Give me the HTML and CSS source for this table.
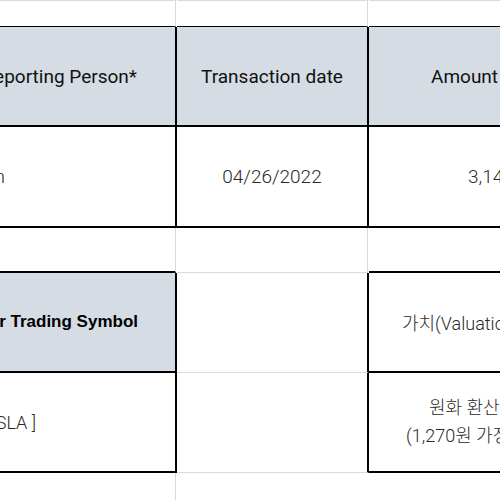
FILE: index.html
```html
<!DOCTYPE html>
<html>
<head>
<meta charset="utf-8">
<link rel="stylesheet" href="styles.css">
</head>
<body>
<div class="sheet">
  <div class="cell r0 c1"></div>
  <div class="cell r0 c2"></div>
  <div class="cell r0 c3"></div>

  <div class="cell hdr t1 c1 end pr38"><span>Name and Address of Reporting Person*</span></div>
  <div class="cell hdr t1 c2 mid"><span>Transaction date</span></div>
  <div class="cell hdr t1 c3 start pl62"><span>Amount of Securities Beneficially Owned</span></div>

  <div class="cell data t1 c1 end pr170"><span>Musk Elon</span></div>
  <div class="cell data t1 c2 mid"><span>04/26/2022</span></div>
  <div class="cell data t1 c3 start pl99"><span>3,140,000</span></div>

  <div class="cell gap g1"></div>
  <div class="cell gap g2"></div>
  <div class="cell gap g3"></div>

  <div class="cell hdr t2 c1 end pr37 bold"><span>Issuer Name and Ticker or Trading Symbol</span></div>
  <div class="cell plain t2 c2"></div>
  <div class="cell data t2 c3 start pl33 kr"><span>가치(Valuation, USD)</span></div>

  <div class="cell data t2 c1 end pr139 kr"><span>Tesla, Inc. [ TSLA ]</span></div>
  <div class="cell plain t2 c2"></div>
  <div class="cell data t2 c3 lines kr">
    <div class="line l1">원화 환산 가치 (KRW)</div>
    <div class="line l2">(1,270원 가정)</div>
  </div>

  <div class="cell tail c1"></div>
  <div class="cell tail c2"></div>
  <div class="cell tail c3"></div>
</div>
</body>
</html>
```

FILE: styles.css
```css
html, body {
  margin: 0;
  padding: 0;
  background: #ffffff;
}
body {
  width: 500px;
  height: 500px;
  overflow: hidden;
  font-family: "Roboto", "Noto Sans CJK KR", sans-serif;
  font-size: 19px;
}
.sheet {
  display: grid;
  grid-template-columns: 177px 192px 400px;
  grid-template-rows: 27px 100px 101px 45px 100px 100px 40px;
  width: 769px;
}
.cell {
  box-sizing: border-box;
  display: flex;
  align-items: center;
  overflow: hidden;
  white-space: nowrap;
}
.end { justify-content: flex-end; }
.mid { justify-content: center; }
.start { justify-content: flex-start; }

.r0 {
  border-top: 1px solid #dadada;
  border-bottom: 1px solid #000;
}
.r0.c1 { border-right: 1px solid #dadada; margin-right: 1px; }
.r0.c2 { border-right: 1px solid #dadada; margin-right: 1px; }

.hdr { background: #d6dce4; color: #111; }
.bold { font-weight: 700; color: #000; font-family: "Liberation Sans", Arial, sans-serif; font-size: 17px; }
.data { color: #2a2a2a; font-weight: 300; }
.kr { font-size: 18px; }

.t1 { border-bottom: 2px solid #000; }
.t1.c1, .t1.c2 { border-right: 2px solid #000; }
.r0 + .r0 + .r0 + .t1 { }

.gap.g1 { border-right: 1px solid #dadada; margin-right: 1px; border-bottom: 2px solid #000; }
.gap.g2 { border-right: 1px solid #dadada; margin-right: 1px; border-bottom: 1px solid #dadada; }
.gap.g3 { border-bottom: 2px solid #000; }

.t2.c1 { border-right: 2px solid #000; border-bottom: 2px solid #000; }
.t2.c2 { border-right: 2px solid #000; border-bottom: 1px solid #dadada; }
.t2.c3 { border-bottom: 2px solid #000; }

.tail.c1 { border-right: 1px solid #dadada; margin-right: 1px; }

.pr38 { padding-right: 38px; }
.pr37 { padding-right: 37px; }
.pr170 { padding-right: 170px; }
.pr139 { padding-right: 139px; }
.pl62 { padding-left: 62px; }
.pl99 { padding-left: 99px; }
.pl33 { padding-left: 33px; }

.lines {
  flex-direction: column;
  align-items: flex-start;
  justify-content: center;
}
.line { line-height: 28px; }
.l1 { padding-left: 60px; }
.l2 { padding-left: 37px; }
```
